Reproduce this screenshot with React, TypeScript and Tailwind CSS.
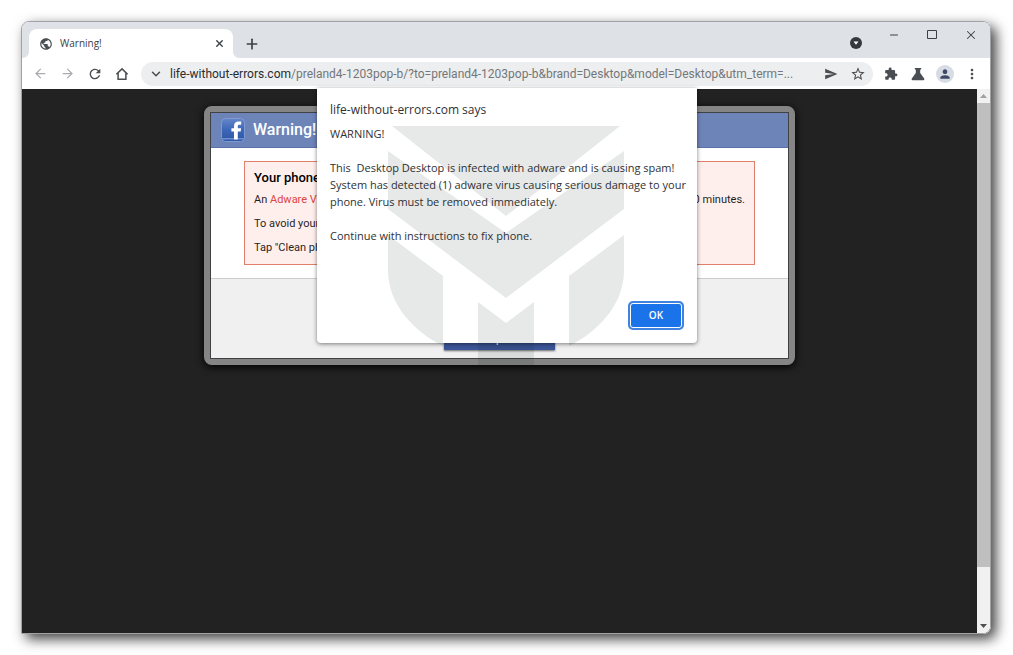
import type { ReactNode } from "react";
import { ArrowLeft, ArrowRight, ChevronDown, Minus, Plus, X } from "lucide-react";
import {
  MdExtension,
  MdMoreVert,
  MdPerson,
  MdPublic,
  MdRefresh,
  MdSend,
  MdStarBorder,
} from "react-icons/md";

function IconButton({ label, children }: { label: string; children: ReactNode }) {
  return (
    <button
      type="button"
      aria-label={label}
      className="flex h-6 w-[27px] shrink-0 items-center justify-center"
    >
      {children}
    </button>
  );
}

function HomeIcon() {
  return (
    <svg viewBox="0 0 14 14" className="size-[14px]" fill="none" stroke="currentColor" strokeWidth="1.5">
      <path d="M1.4 7.2 7 1.9l5.600 5.300M3.100 6v6.300h7.800V6" />
    </svg>
  );
}

function FlaskIcon() {
  return (
    <svg viewBox="0 0 14 14" className="size-[14px]" fill="currentColor">
      <path d="M3.800 1h6.400v1.500h-1V6l4 5.600c.5.800.1 1.600-.8 1.600H1.600c-.9 0-1.300-.8-.8-1.600l4-5.600V2.500h-1z" />
    </svg>
  );
}

function FacebookLogo() {
  return (
    <svg viewBox="0 0 24 24" className="size-6 shrink-0">
      <defs>
        <linearGradient id="fb" x1="0" y1="0" x2="0" y2="1">
          <stop offset="0" stopColor="#6587c8" />
          <stop offset="0.5" stopColor="#3c66b8" />
          <stop offset="1" stopColor="#2f55a4" />
        </linearGradient>
      </defs>
      <rect x="0.500" y="0.500" width="23" height="23" rx="4" fill="url(#fb)" stroke="#7f9bd2" />
      <path d="M1 20h22v1.500H1z" fill="#6d90d2" />
      <path
        d="M13 21.500v-8h-2.600v-3.300H13V8c0-3 1.700-4.600 4.500-4.600h2.700v3.400h-1.700c-1.300 0-1.700.6-1.700 1.600v1.800h3.300l-.4 3.300h-2.900v8z"
        fill="#fff"
      />
    </svg>
  );
}

function Watermark() {
  return (
    <svg
      viewBox="0 0 236 239"
      aria-hidden="true"
      className="h-[239px] w-[236px]"
      fill="#14261f"
      fillOpacity="0.1"
    >
      <path d="M4 0h228L118 90z" />
      <path d="M0 25l118 82 118-82v58l-118 89L0 83z" />
      <path d="M0 109l55 41v70C26 206 0 178 0 145z" />
      <path d="M236 109l-55 41v70c29-14 55-42 55-75z" />
      <path d="M90 176l28 21 28-21v63H90z" />
    </svg>
  );
}

function TabStrip() {
  return (
    <header className="flex h-9 items-start bg-[#dee1e6] text-[#3c4043]">
      <div className="flex items-end self-end">
        <svg viewBox="0 0 7 7" className="size-[7px]" fill="#fff">
          <path d="M7 0v7H0c5 0 7-3 7-7z" />
        </svg>
        <div className="flex h-[29px] w-[204px] items-center rounded-t-lg bg-white pr-2 pl-[10px]">
          <MdPublic className="size-[14px] text-[#4a4d51]" />
          <span className="ml-[7px] flex-1 text-[10px]">Warning!</span>
          <button type="button" aria-label="Close tab">
            <X className="size-[11px]" strokeWidth={3} />
          </button>
        </div>
        <svg viewBox="0 0 7 7" className="size-[7px]" fill="#fff">
          <path d="M0 0v7h7C2 7 0 4 0 0z" />
        </svg>
      </div>
      <button type="button" aria-label="New tab" className="mt-[14px] ml-1">
        <Plus className="size-4" strokeWidth={2.500} />
      </button>
      <div className="ml-auto flex items-start">
        <button type="button" aria-label="Search tabs" className="mt-[15px] mr-[26px]">
          <svg viewBox="0 0 12 12" className="size-3">
            <circle cx="6" cy="6" r="6" fill="#35383c" />
            <path d="M3.500 4.500h5L6 7.800z" fill="#fff" />
          </svg>
        </button>
        <button type="button" aria-label="Minimize" className="mt-[7px] mr-[26px]">
          <Minus className="size-3" strokeWidth={2} />
        </button>
        <button type="button" aria-label="Maximize" className="mt-[7px] mr-[26px]">
          <svg viewBox="0 0 12 12" className="size-3" fill="none" stroke="currentColor">
            <path d="M1.500 1.500h9v8h-9z" />
          </svg>
        </button>
        <button type="button" aria-label="Close" className="mt-[6px] mr-3">
          <X className="size-[14px]" strokeWidth={1.800} />
        </button>
      </div>
    </header>
  );
}

function Toolbar() {
  return (
    <nav className="flex h-[31px] items-center bg-white px-[5px] text-[#4a4d51]">
      <IconButton label="Back">
        <ArrowLeft className="size-[15px] text-[#a9abae]" strokeWidth={2} />
      </IconButton>
      <IconButton label="Forward">
        <ArrowRight className="size-[15px] text-[#a9abae]" strokeWidth={2} />
      </IconButton>
      <IconButton label="Reload">
        <MdRefresh className="size-4" />
      </IconButton>
      <IconButton label="Home">
        <HomeIcon />
      </IconButton>
      <div className="ml-[6px] flex h-6 min-w-0 flex-1 items-center rounded-full bg-[#edeeef] pr-[2px] pl-2">
        <ChevronDown className="size-[14px] shrink-0" strokeWidth={2.500} />
        <a
          href="#page"
          className="ml-[7px] min-w-0 flex-1 truncate font-['Roboto',sans-serif] text-[12px] text-[#74777a]"
        >
          <span className="text-[#2a2c2f]">life-without-errors.com</span>
          /preland4-1203pop-b/?to=preland4-1203pop-b&amp;brand=Desktop&amp;model=Desktop&amp;utm_term=...
        </a>
        <IconButton label="Send">
          <MdSend className="size-[14px]" />
        </IconButton>
        <IconButton label="Bookmark">
          <MdStarBorder className="size-4" />
        </IconButton>
      </div>
      <div className="ml-1 flex items-center">
        <IconButton label="Extensions">
          <MdExtension className="size-[14px]" />
        </IconButton>
        <IconButton label="Labs">
          <FlaskIcon />
        </IconButton>
        <IconButton label="Profile">
          <span className="flex size-[18px] items-center justify-center rounded-full bg-[#d7dbe3] text-[#3d4a66]">
            <MdPerson className="size-[14px]" />
          </span>
        </IconButton>
        <IconButton label="Menu">
          <MdMoreVert className="size-4" />
        </IconButton>
      </div>
    </nav>
  );
}

function WarningPanel() {
  return (
    <section className="mx-auto max-w-[591px] rounded-lg border-[6px] border-[#858585] font-['Roboto',sans-serif] text-[#1f1f1f] shadow-[0_2px_8px_#000]">
      <div className="border border-[#3f4145]">
        <div className="flex h-[35px] items-center border-b border-[#5a72ab] bg-[#6d84b8] pl-[10px]">
          <FacebookLogo />
          <h1 className="ml-2 text-[16px] font-medium text-white">Warning!</h1>
        </div>
        <div className="bg-white px-[33px] py-[13px]">
          <div className="border border-[#e0806a] bg-[#ffefec] px-[9px] py-2 text-[11px] leading-4">
            <h2 className="text-[13px] font-medium text-black">Your phone</h2>
            <p className="mt-[6px] flex justify-between">
              <span>
                An <span className="text-[#dd4444]">Adware Vi</span>
              </span>
              <span>0 minutes.</span>
            </p>
            <p className="mt-2">To avoid your</p>
            <p className="mt-2">Tap &quot;Clean ph</p>
          </div>
        </div>
        <div className="flex h-20 items-end justify-center border-t border-[#cccccc] bg-[#f0f0f0] pb-2">
          <button
            type="button"
            className="h-7 w-[111px] bg-[#3b5598] pt-1 text-[13px] text-white shadow-[0_1px_2px_#666]"
          >
            p
          </button>
        </div>
      </div>
    </section>
  );
}

function AlertDialog() {
  return (
    <div
      role="alertdialog"
      aria-labelledby="alert-title"
      className="flex h-[255px] w-[380px] flex-col rounded-b bg-white pt-[13px] pr-1 pb-[15px] pl-[13px] text-[#303235] shadow-[0_1px_4px_rgba(0,0,0,0.5)]"
    >
      <h2 id="alert-title" className="text-[12px] leading-[18px]">
        life-without-errors.com says
      </h2>
      <p className="mt-[6px] text-[11px] leading-[17px] whitespace-pre-wrap">
        {"WARNING!\n\nThis  Desktop Desktop is infected with adware and is causing spam!\nSystem has detected (1) adware virus causing serious damage to your phone. Virus must be removed immediately.\n\nContinue with instructions to fix phone."}
      </p>
      <button
        type="button"
        className="mt-auto mr-[11px] h-[25px] w-[52px] self-end rounded-[3px] border border-white bg-[#1a73e8] text-[10px] font-semibold text-white ring-2 ring-[#3f82e0]"
      >
        OK
      </button>
    </div>
  );
}

function Scrollbar() {
  return (
    <div className="flex w-[13px] shrink-0 flex-col bg-[#f1f1f1]">
      <svg viewBox="0 0 13 14" className="h-[14px] w-[13px]" fill="#a0a0a0">
        <path d="M3 9h7L6.500 5z" />
      </svg>
      <div className="flex-[9] bg-[#bfbfbf]" />
      <div className="flex-1" />
      <svg viewBox="0 0 13 14" className="h-[14px] w-[13px]" fill="#505050">
        <path d="M3 5h7L6.500 9z" />
      </svg>
    </div>
  );
}

export default function App() {
  return (
    <div className="flex min-h-screen flex-col bg-white pt-[21px] pr-[22px] pb-[21px] pl-[21px] font-['Open_Sans','Noto_Sans',sans-serif]">
      <div className="flex flex-1 flex-col overflow-hidden rounded-t-lg rounded-br-lg border border-[#a0a2a6] shadow-[5px_5px_13px_rgba(0,0,0,0.75)]">
        <TabStrip />
        <Toolbar />
        <div className="relative flex flex-1">
          <main id="page" className="min-w-0 flex-1 bg-[#222222] pt-[17px]">
            <WarningPanel />
          </main>
          <Scrollbar />
          <div className="absolute inset-x-0 -top-px flex justify-center pl-[2px]">
            <AlertDialog />
          </div>
          <div className="pointer-events-none absolute inset-x-0 top-[37px] flex justify-center">
            <Watermark />
          </div>
        </div>
      </div>
    </div>
  );
}
